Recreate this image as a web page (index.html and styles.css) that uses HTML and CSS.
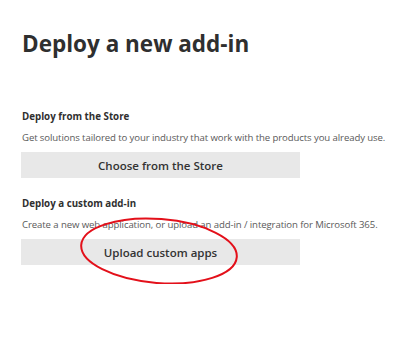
FILE: index.html
```html
<!DOCTYPE html>
<html lang="en">
<head>
    <meta charset="UTF-8">
    <title>Deploy a new add-in</title>
    <link rel="stylesheet" href="styles.css">
</head>
<body>

<div class="panel">
    <h1>Deploy a new add-in</h1>

    <div class="section">
        <h3>Deploy from the Store</h3>
        <p>Get solutions tailored to your industry that work with the products you already use.</p>
        <button>Choose from the Store</button>
    </div>

    <div class="section">
        <h3>Deploy a custom add-in</h3>
        <p>Create a new web application, or upload an add-in / integration for Microsoft 365.</p>
        <button>Upload custom apps</button>
    </div>

    <!-- Red hand-drawn circle around the upload button -->
    <svg class="marker" width="170" height="76" viewBox="0 0 170 76">
        <ellipse cx="85" cy="38" rx="78" ry="32" transform="rotate(4.5 85 38)" fill="none" stroke="#e3101a" stroke-width="2"/>
    </svg>
</div>

</body>
</html>
```

FILE: styles.css
```css
body {
    margin: 0;
    background: #fff;
    font-family: 'Open Sans', sans-serif;
    color: #2f2f2f;
}

.panel {
    position: relative;
    padding: 29px 0 0 21px;
}

h1 {
    margin: 0 0 51px 1px;
    font-size: 22.5px;
    font-weight: 700;
    line-height: 30px;
}

.section {
    margin-bottom: 19px;
}

h3 {
    margin: 0 0 7px 1px;
    font-size: 9.75px;
    font-weight: 700;
    line-height: 14px;
}

p {
    margin: 0 0 7px 1px;
    font-size: 9.6px;
    letter-spacing: -0.1px;
    line-height: 14px;
    color: #5a5a5a;
    white-space: nowrap;
}

button {
    display: block;
    width: 279px;
    height: 26px;
    padding: 0;
    border: none;
    border-radius: 0;
    background: #e8e8e8;
    color: #333;
    font-family: inherit;
    font-size: 11.5px;
    font-weight: 600;
}

/* Annotation overlay */
.marker {
    position: absolute;
    left: 74px;
    top: 213px;
}
```
